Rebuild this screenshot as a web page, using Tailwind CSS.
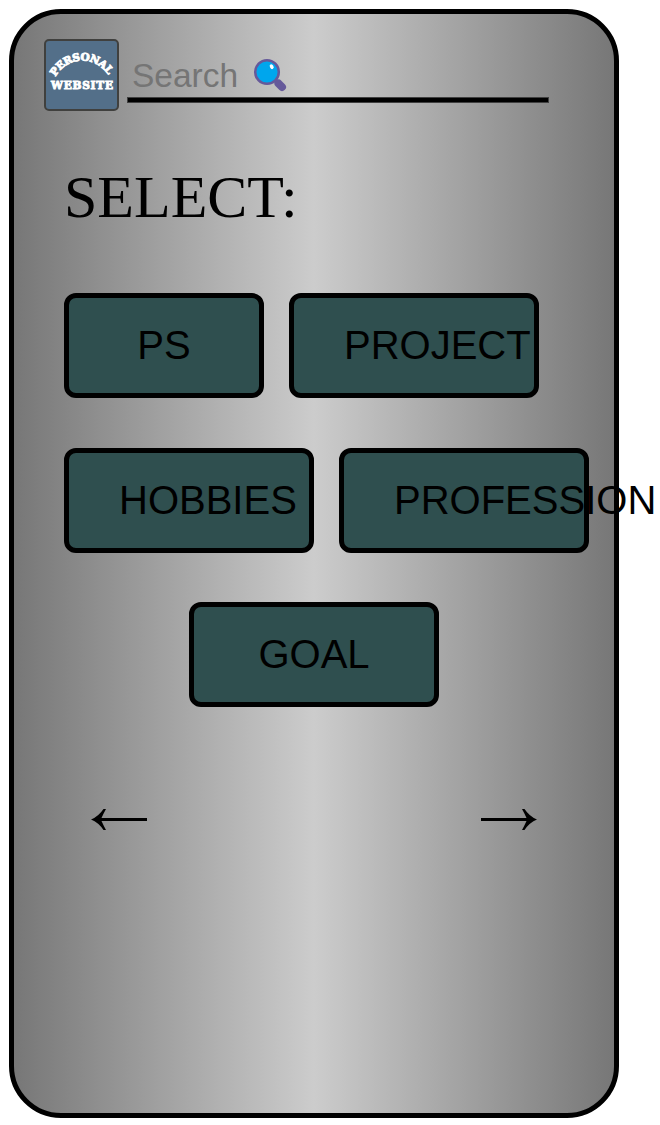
<!DOCTYPE html>
<html lang="en">
<head>
<meta charset="utf-8">
<title>Personal Website</title>
<script src="https://cdn.jsdelivr.net/npm/@tailwindcss/browser@4"></script>
</head>
<body class="bg-white overflow-hidden p-[9px] text-black">
<main class="w-[610px] h-[1109px] border-5 border-black rounded-[52px] bg-[linear-gradient(90deg,#777_0%,#ccc_50%,#777_100%)] font-['Liberation_Sans',Arial,sans-serif]">
  <header class="flex pl-[30px] pt-[25px] h-[97px]">
    <svg class="w-[75px] h-[72px] shrink-0" viewBox="0 0 75 72" role="img">
      <rect x="1" y="1" width="73" height="70" rx="4" fill="#536f89" stroke="#40403e" stroke-width="2"/>
      <defs><path id="arc" d="M11.500 38C24 16 52 16 65.500 38"/></defs>
      <g fill="#fff" stroke="#fff" stroke-width=".9" font-family="'DejaVu Serif',serif" font-weight="bold">
        <text font-size="10.500"><textPath href="#arc" textLength="64" lengthAdjust="spacing">PERSONAL</textPath></text>
        <text x="7" y="49.500" font-size="10.600" textLength="62" lengthAdjust="spacing">WEBSITE</text>
      </g>
    </svg>
    <div class="ml-2 mt-2 w-[422px] h-[56px] flex flex-col justify-between">
      <div class="flex items-start pl-[5px] pt-[9px] h-[50px]">
        <span class="mt-px text-[33.500px] leading-[38px] text-[#757575]">Search</span>
        <svg class="ml-[15px] mt-[2px] w-[36px] h-[36px]" viewBox="0 0 36 36">
          <path d="M22 22L29 29" stroke="#65599a" stroke-width="4"/>
          <path d="M25.500 25.500L29 29" stroke="#65599a" stroke-width="8" stroke-linecap="round"/>
          <circle cx="14" cy="14" r="11.800" fill="#00a6ed" stroke="#65599a" stroke-width="2.500"/>
          <ellipse cx="18.700" cy="8.700" rx="1.800" ry="2.500" fill="#fff" transform="rotate(-30 18.700 8.700)"/>
        </svg>
      </div>
      <div class="h-[6px] bg-black border border-[#404040]"></div>
    </div>
  </header>
  <h1 class="pl-[50px] mt-[53px] h-[67px] leading-[67px] text-[60px] font-['Liberation_Serif','Times_New_Roman',serif]">SELECT:</h1>
  <nav class="mt-[62px] pl-[50px] text-[40px] leading-[46px] whitespace-nowrap">
    <div class="flex gap-[25px]">
      <button class="w-[200px] h-[105px] border-5 border-black rounded-xl bg-[#2f4f4f] pb-[2px]">PS</button>
      <button class="w-[250px] h-[105px] border-5 border-black rounded-xl bg-[#2f4f4f] pb-[2px] pl-[50px] text-left">PROJECT</button>
    </div>
    <div class="flex gap-[25px] mt-[50px]">
      <button class="w-[250px] h-[105px] border-5 border-black rounded-xl bg-[#2f4f4f] pb-[2px] pl-[50px] text-left">HOBBIES</button>
      <button class="w-[250px] h-[105px] border-5 border-black rounded-xl bg-[#2f4f4f] pb-[2px] pl-[50px] text-left shrink-0">PROFESSION</button>
    </div>
    <div class="mt-[49px] pl-[125px] flex">
      <button class="w-[250px] h-[105px] border-5 border-black rounded-xl bg-[#2f4f4f] pb-[2px]">GOAL</button>
    </div>
  </nav>
  <div class="flex justify-between mt-[102px] pl-[77px] pr-[77px]">
    <svg class="w-[56px] h-[22px]" viewBox="0 0 56 22"><path d="M56 9H10.500Q12.500 4.500 15 0H12.500Q7.500 7.500 0 10.500Q7.500 13.500 12.500 21H15Q12.500 16.500 10.500 12H56Z"/></svg>
    <svg class="w-[56px] h-[22px]" viewBox="0 0 56 22"><path d="M0 9H45.500Q43.500 4.500 41 0H43.500Q48.500 7.500 56 10.500Q48.500 13.500 43.500 21H41Q43.500 16.500 45.500 12H0Z"/></svg>
  </div>
</main>
</body>
</html>
